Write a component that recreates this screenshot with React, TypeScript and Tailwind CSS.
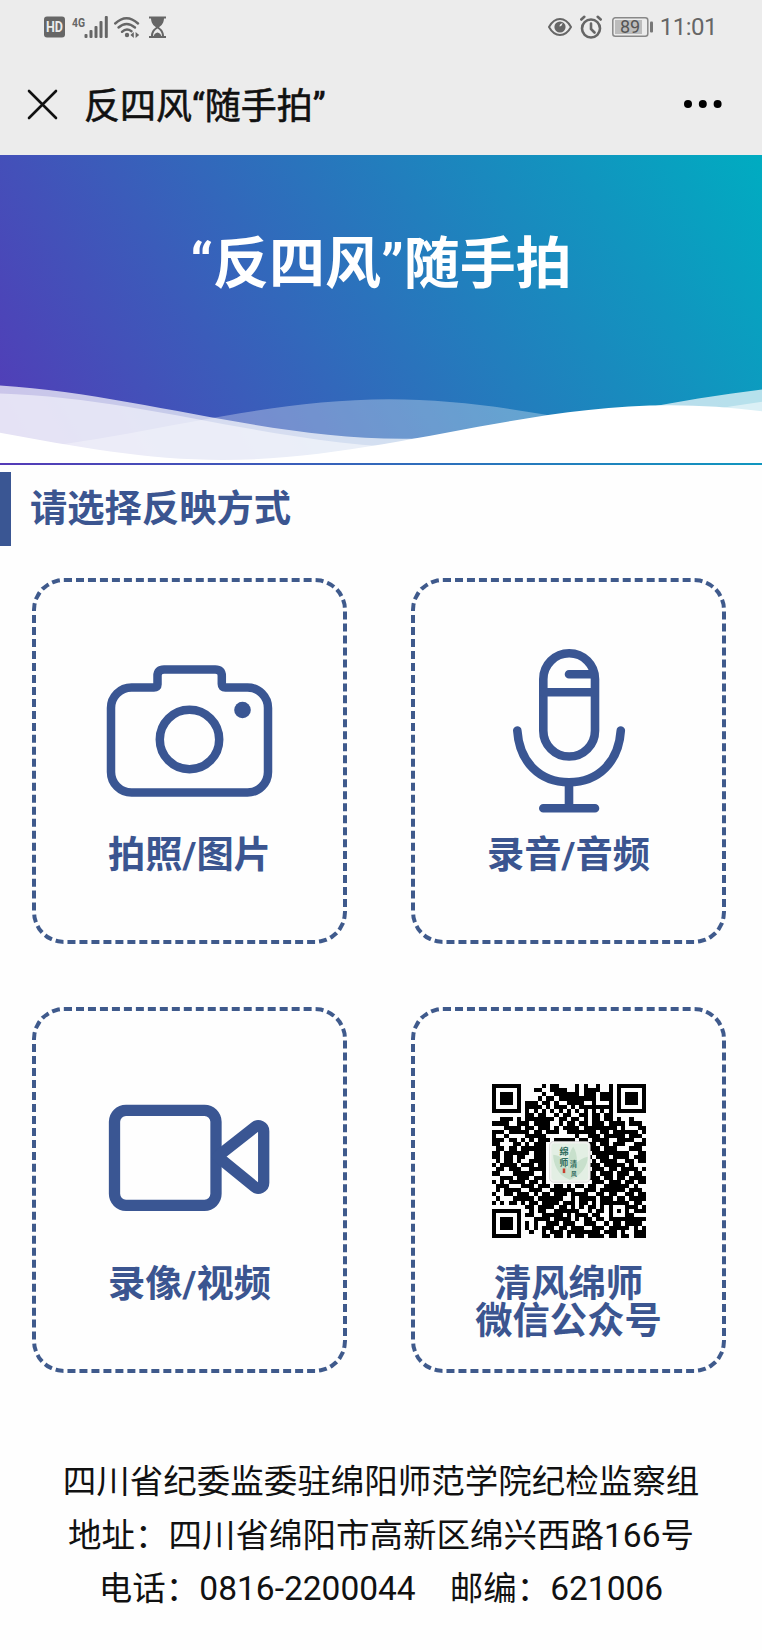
import React from 'react';

const QR_ROWS = [
    '1111111000001011000010100100101111111',
    '1000001000110011110010111100101000001',
    '1011101000001001111110111011101011101',
    '1011101000010110111111111011101011101',
    '1011101011101101001111001000101011101',
    '1000001011110101110101111111101000001',
    '1111111010101010101010101010101111111',
    '0000000011011001011001101101100000000',
    '0011101011111110110110101101101001000',
    '1111001110111100101101101110111101110',
    '0001111011011101011110111111110100011',
    '1110111110110111001111111011011111101',
    '1001000011111000000010011101111101110',
    '1110110101011101111101101111001111001',
    '1100011010111000000000011011011100111',
    '0110110111111000000000011101110001110',
    '1101111110111000000000001111111110011',
    '1101101100111000000000010111011110111',
    '0101101001111000000000001011110011011',
    '1011110111011000000000011101111101000',
    '0110111001111000000000001110110111101',
    '1100011111001000000000011011101110110',
    '0011101110111000000000011101101101111',
    '1010111101101000000000001110111011011',
    '0111000111011101101011011001111110100',
    '0101111001110011111100111011111101110',
    '1001101110101101110111100110110011011',
    '0100011111011111100101111011101101111',
    '1010110101101111011101101011111110110',
    '0000000011011110110101011010100011101',
    '1111111001011001111110010110101010111',
    '1000001011001111101011101100100011000',
    '1011101000111101111010110110111111111',
    '1011101010100111011100111001011011110',
    '1011101010101110110111001110111110101',
    '1000001001001011101111111101110100111',
    '1111111000001101101011011110110110111',
];

const WAVE = 'M-160 44c30 0 58-18 88-18s58 18 88 18 58-18 88-18 58 18 88 18v44h-352z';

const StatusBar = () => (
    <div className="flex h-[53px] items-center justify-between pl-11 pr-[45px] pt-px text-[#666]">
        <div className="flex items-center">
            <svg width="21" height="22" viewBox="0 0 21 22">
                <rect y="0.5" width="21" height="21" rx="3" fill="#666" />
                <text x="10.5" y="16" textAnchor="middle" fontSize="14" fontWeight="700" fill="#ececec" textLength="17" lengthAdjust="spacingAndGlyphs" fontFamily="Roboto">HD</text>
            </svg>
            <svg className="ml-[5px]" width="38" height="28" viewBox="-2 -3 38 28" fill="#666">
                <text x="0" y="11" fontSize="13" fontWeight="700" textLength="13" lengthAdjust="spacingAndGlyphs" fontFamily="Roboto">4G</text>
                <rect x="12.5" y="18" width="3" height="4" rx="1" />
                <rect x="17.5" y="14" width="3" height="8" rx="1" />
                <rect x="22.5" y="10" width="3" height="12" rx="1" />
                <rect x="27.5" y="5" width="3" height="17" rx="1" />
                <rect x="32.8" y="0" width="3" height="22" rx="1" />
            </svg>
            <svg className="ml-[5px]" width="28" height="24" viewBox="0 0 28 24" fill="none" stroke="#666" strokeWidth="2.4" strokeLinecap="round">
                <path d="M2.2 8.5Q13.5-2 25 8.5" />
                <path d="M5.5 12.5Q13.5 5.5 22 12.5" />
                <path d="M9 16.8Q13.5 12.4 18.5 16.2" />
                <circle cx="14" cy="20" r="2.2" fill="#666" stroke="none" />
                <path d="M20.8 17v6l-3.4-3zM22.6 17v6l3.6-3z" fill="#666" stroke="none" />
            </svg>
            <svg className="ml-2" width="17" height="24" viewBox="0 0 17 24" fill="#666">
                <path d="M0 1.5h17v2H0zM0 21h17v2H0z" />
                <path d="M2 3h13c0 5-2.5 7.5-5 9.3C12.5 14 15 16.5 15 21h-2c0-3.5-2-6-4.5-7.5C6 15 4 17.5 4 21H2c0-4.5 2.5-7 5-8.7C4.5 10.5 2 8 2 3z" />
                <path d="M4.5 21.5c.5-2.500 2-3.500 4-4 2 .5 3.500 1.500 4 4z" />
            </svg>
        </div>
        <div className="flex items-center">
            <svg width="24" height="20" viewBox="0 0 24 20" fill="none" stroke="#666" strokeWidth="2">
                <path d="M1 10C4 4.5 8 2 12 2s8 2.5 11 8c-3 5.5-7 8-11 8S4 15.5 1 10z" />
                <circle cx="12" cy="10" r="5.6" fill="#666" stroke="none" />
                <path d="M11.5 9.5q0-3 3.300-3.200-1 3-3.300 3.200z" fill="#ececec" stroke="none" />
            </svg>
            <svg className="ml-2" width="22" height="24" viewBox="0 0 22 24" fill="none" stroke="#666" strokeWidth="2.6" strokeLinecap="round">
                <circle cx="11" cy="13.5" r="9" />
                <path d="M11 8.5v5.500l3.500 3.500M1.300 4.500l3-2.700M20.700 4.500l-3-2.700" />
            </svg>
            <svg className="ml-2.5" width="42" height="22" viewBox="0 0 42 22">
                <rect x="0.8" y="1.8" width="35" height="18.4" rx="2.5" fill="none" stroke="#888" strokeWidth="1.5" />
                <rect x="3" y="4" width="27" height="14" fill="#bcbcbc" />
                <rect x="38" y="5.5" width="3" height="11" rx="1" fill="#777" />
                <text x="18" y="17.2" textAnchor="middle" fontSize="18" fill="#555" fontFamily="Roboto">89</text>
            </svg>
            <span className="ml-1.5 text-2xl leading-none tracking-[-0.5px] text-[#666]">11:01</span>
        </div>
    </div>
);

const NavBar = () => (
    <div className="flex h-[102px] items-center pl-[27px] pr-10">
        <svg width="31" height="31" viewBox="0 0 31 31" stroke="#111" strokeWidth="2.6" strokeLinecap="round">
            <path d="M2 2l27 27M29 2L2 29" />
        </svg>
        <h1 className="ml-[26px] pt-[5px] text-[36px] leading-none text-[#111] [-webkit-text-stroke:0.6px_#111]">反四风“随手拍”</h1>
        <svg className="ml-auto" width="38" height="10" viewBox="0 0 38 10">
            <circle cx="4" cy="5" r="4" />
            <circle cx="18.8" cy="5" r="4" />
            <circle cx="33.6" cy="5" r="4" />
        </svg>
    </div>
);

const Banner = () => (
    <div className="flex h-[310px] flex-col bg-[linear-gradient(60deg,#543ab7_0%,#00acc1_100%)]">
        <div className="flex h-[223px] items-center justify-center pb-[5px]">
            <h2 className="text-[56px] font-bold leading-none text-white">“反四风”随手拍</h2>
        </div>
        <svg className="block h-[85px] w-full" viewBox="0 24 150 28" preserveAspectRatio="none">
            <path d={WAVE} transform="translate(63.3 0)" fill="rgba(255,255,255,0.7)" />
            <path d={WAVE} transform="translate(68.3 3)" fill="rgba(255,255,255,0.5)" />
            <path d={WAVE} transform="translate(-27.4 5)" fill="rgba(255,255,255,0.3)" />
            <path d={WAVE} transform="translate(27.9 7)" fill="#fff" />
        </svg>
    </div>
);

const CameraIcon = () => (
    <svg width="180" height="180" viewBox="0 0 180 180" fill="none" stroke="#3a5693" strokeWidth="8.5">
        <path d="M57.500 46.500V38q0-6.500 6.500-6.500h51.300q6.500 0 6.500 6.500v8q0 3.500 3.500 3.500H147.500a20.500 20.500 0 0 1 20.500 20.500v64A20.500 20.500 0 0 1 147.500 154.500H31.500A20.500 20.500 0 0 1 11 134v-64A20.500 20.500 0 0 1 31.500 49.500h22.500q3.500 0 3.500-3z" />
        <circle cx="89.5" cy="101.5" r="29.7" />
        <circle cx="142.5" cy="72" r="8.3" fill="#3a5693" stroke="none" />
    </svg>
);

const MicIcon = () => (
    <svg width="180" height="180" viewBox="0 0 180 180" fill="none" stroke="#3a5693" strokeWidth="8.6" strokeLinecap="round">
        <rect x="64.3" y="15.3" width="51.7" height="103.2" rx="25.85" />
        <path d="M65 54.3h50M90 36.3h23" />
        <path d="M38.3 92.5c2 31 22 51.7 51.7 51.7s49.8-20.7 51.8-51.7" />
        <path d="M90 145v25M64.3 170.3h51.7" />
    </svg>
);

const VideoIcon = () => (
    <svg width="180" height="180" viewBox="0 0 180 180" fill="none" stroke="#3a5693" strokeWidth="11.3" strokeLinejoin="round">
        <rect x="14.5" y="43.3" width="101.5" height="95" rx="11.5" />
        <path d="M117.500 89.500l37.500-29.500a5.400 5.400 0 0 1 8.700 4.300v51.500a5.400 5.400 0 0 1-8.700 4.300z" />
    </svg>
);

const QrCode = () => (
    <svg className="mt-[7px]" width="154" height="154" viewBox="0 0 37 37" shapeRendering="crispEdges">
        {QR_ROWS.map((row, y) =>
            row.split('').map((cell, x) => (cell === '1' ? <rect key={`${x}-${y}`} x={x} y={y} width="1" height="1" /> : null))
        )}
        <g shapeRendering="auto">
            <rect x="13.8" y="13.8" width="9.8" height="9.8" rx="1" fill="#f2f2f0" stroke="#ccc" strokeWidth=".15" />
            <rect x="14.3" y="14.3" width="8.8" height="8.8" rx=".7" fill="#e3efe4" />
            <path d="M18.7 23c-3-1-4-4-4-6 2 0 3.500 2 4 6zM18.700 23c-1-3-.5-6 .8-8 1.300 2 1.300 5-.8 8zM18.700 23c0-3 2-5 4.300-5.500 0 2-1.300 4.500-4.300 5.500z" fill="#c8e0cc" />
            <g fill="#2f6b5c" fontWeight="700">
                <text x="16.2" y="17" fontSize="2.2">绵</text>
                <text x="16.2" y="19.8" fontSize="2.1">师</text>
                <text x="18.7" y="20" fontSize="1.8">清</text>
                <text x="19" y="22.2" fontSize="1.4">风</text>
            </g>
            <rect x="17" y="20.3" width=".6" height="1.1" fill="#c8402f" />
        </g>
    </svg>
);

interface OptionCardProps {
    icon: React.ReactNode;
    label: React.ReactNode;
}

const OptionCard: React.FC<OptionCardProps> = ({ icon, label }) => (
    <button className="flex h-[366px] w-[315px] flex-col items-center rounded-[32px] border-4 border-dashed border-[#3f5a8c] pt-14 text-[37.3px] font-bold leading-[37px] text-[#3b5590]">
        <span className="flex h-[180px] w-[180px] items-center justify-center">{icon}</span>
        <span className="mt-[19px]">{label}</span>
    </button>
);

export default function App() {
    return (
        <div lang="zh-CN" className="min-h-[1650px] w-[762px] overflow-hidden bg-[#fefefe] font-[Roboto,'Noto_Sans_CJK_SC',sans-serif]">
            <header className="bg-[#ececec]">
                <StatusBar />
                <NavBar />
            </header>
            <Banner />
            <div className="mt-[7px] flex h-[74px] items-center border-l-[11px] border-[#3a5693] pl-[19px] pt-px text-[37.3px] font-bold leading-none text-[#3b5590]">
                请选择反映方式
            </div>
            <main className="mt-8 grid grid-cols-[315px_315px] gap-x-16 gap-y-[63px] pl-8">
                <OptionCard icon={<CameraIcon />} label="拍照/图片" />
                <OptionCard icon={<MicIcon />} label="录音/音频" />
                <OptionCard icon={<VideoIcon />} label="录像/视频" />
                <OptionCard icon={<QrCode />} label={<>清风绵师<br />微信公众号</>} />
            </main>
            <footer className="mt-[82px] text-center text-[33.5px] leading-[53.5px] text-[#111]">
                <p>四川省纪委监委驻绵阳师范学院纪检监察组</p>
                <p>地址：四川省绵阳市高新区绵兴西路166号</p>
                <p>电话：0816-2200044<span className="ml-[34px]">邮编：621006</span></p>
            </footer>
        </div>
    );
}
